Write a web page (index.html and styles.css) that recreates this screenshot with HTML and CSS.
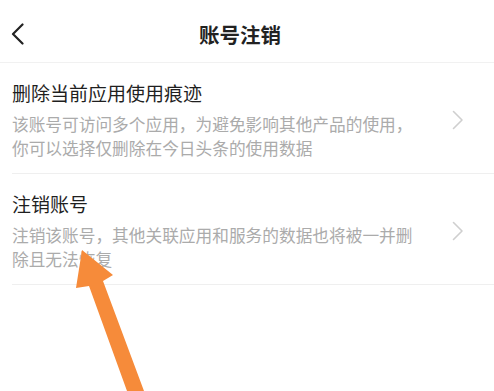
FILE: index.html
```html
<!DOCTYPE html>
<html lang="zh-CN">
<head>
<meta charset="utf-8">
<title>账号注销</title>
<link rel="stylesheet" href="styles.css">
</head>
<body>
<div class="page">
  <header class="topbar">
    <div class="back">
      <svg width="14" height="22" viewBox="0 0 14 22"><polyline points="11.5,1.5 2,11 11.5,20.5" fill="none" stroke="#222" stroke-width="2.2" stroke-linecap="round" stroke-linejoin="round"/></svg>
    </div>
    <h1 class="title">账号注销</h1>
    <div class="spacer"></div>
  </header>
  <div class="row">
    <div class="text">
      <div class="row-title">删除当前应用使用痕迹</div>
      <div class="row-desc">该账号可访问多个应用，为避免影响其他产品的使用，你可以选择仅删除在今日头条的使用数据</div>
    </div>
    <svg class="chev" width="12" height="20" viewBox="0 0 12 20"><polyline points="1.5,1.5 10,10 1.5,18.5" fill="none" stroke="#cfcfcf" stroke-width="1.6" stroke-linecap="round" stroke-linejoin="round"/></svg>
  </div>
  <div class="row">
    <div class="text">
      <div class="row-title">注销账号</div>
      <div class="row-desc">注销该账号，其他关联应用和服务的数据也将被一并删除且无法恢复</div>
    </div>
    <svg class="chev" width="12" height="20" viewBox="0 0 12 20"><polyline points="1.5,1.5 10,10 1.5,18.5" fill="none" stroke="#cfcfcf" stroke-width="1.6" stroke-linecap="round" stroke-linejoin="round"/></svg>
  </div>
  <svg class="arrow" width="494" height="391" viewBox="0 0 494 391"><polygon points="82,250 113,275 103,281 144,391 127,391 89,286 76,288" fill="#f68b3a"/></svg>
</div>
</body>
</html>
```

FILE: styles.css
```css
html, body {
  margin: 0;
  padding: 0;
  background: #ffffff;
}
body {
  font-family: "Noto Sans CJK SC", "Noto Sans", sans-serif;
  color: #222;
}
.page {
  position: relative;
  width: 494px;
  height: 391px;
  overflow: hidden;
}
.topbar {
  box-sizing: border-box;
  height: 63px;
  padding-top: 5px;
  padding-right: 14px;
  border-bottom: 1px solid #f1f1f1;
  display: grid;
  grid-template-columns: 1fr auto 1fr;
  align-items: center;
}
.back {
  padding-left: 11px;
  display: flex;
  align-items: center;
}
.title {
  margin: 0;
  font-size: 20.5px;
  font-weight: 700;
  line-height: 28px;
  color: #222;
}
.row {
  display: flex;
  align-items: center;
  margin-left: 12px;
  padding: 17px 30px 13px 0;
  border-bottom: 1px solid #efefef;
}
.text {
  width: 410px;
}
.row-title {
  font-size: 19px;
  line-height: 26px;
  color: #1f1f1f;
}
.row-desc {
  margin-top: 7px;
  font-size: 16.7px;
  line-height: 23.5px;
  color: #ababab;
}
.chev {
  margin-left: auto;
}
.arrow {
  position: absolute;
  left: 0;
  top: 0;
}
```
